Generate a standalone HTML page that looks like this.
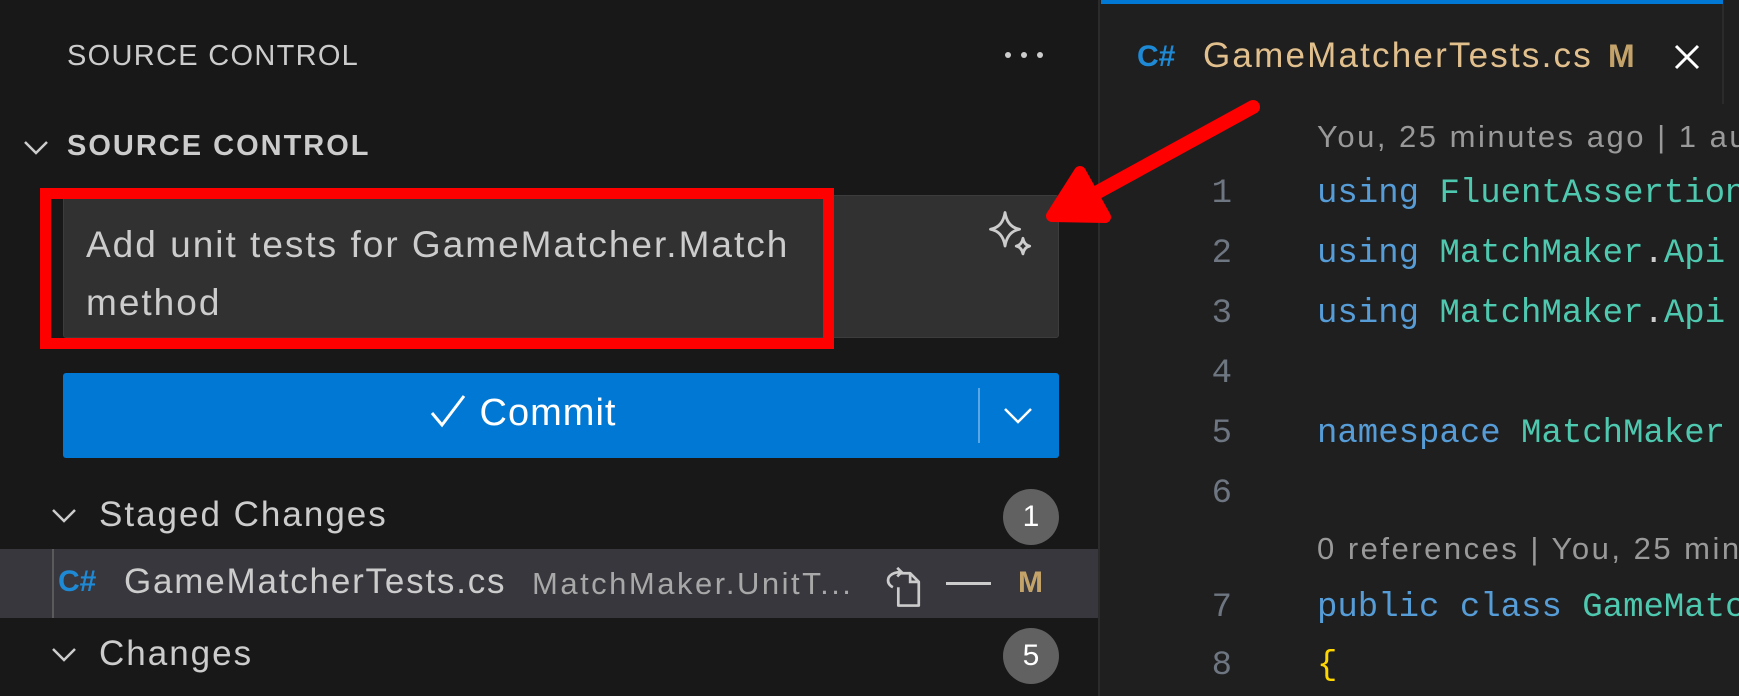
<!DOCTYPE html>
<html><head><meta charset="utf-8"><style>
*{margin:0;padding:0;box-sizing:border-box}
html,body{overflow:hidden}
body{width:1739px;height:696px;background:#181818;position:relative;font-family:"Liberation Sans",sans-serif;color:#ccc}
.a{position:absolute;white-space:nowrap}
.clip{position:absolute;left:0;top:0;width:1739px;height:696px;overflow:hidden}
.mono{font-family:"Liberation Mono",monospace;font-size:34px}
.kw{color:#569cd6}.ty{color:#4ec9b0}
.ln{color:#6e7681;font-family:"Liberation Mono",monospace;font-size:34px;width:60px;text-align:right;left:1172px}
.lens{color:#999;font-size:31px;letter-spacing:2.5px;left:1317px}
.badge{position:absolute;width:56px;height:56px;border-radius:28px;background:#616161;color:#fff;font-size:30px;text-align:center;line-height:56px}
</style></head><body>
<div class="clip">
<div class="a" style="left:1098px;top:0;width:641px;height:696px;background:#1f1f1f;border-left:2px solid #2b2b2b"></div>
<div class="a" style="left:1101px;top:0;width:622px;height:4px;background:#0078d4"></div>
<div class="a" style="left:1722px;top:4px;width:2px;height:100px;background:#2b2b2b"></div>

<div class="a" style="left:67px;top:40px;font-size:29px;letter-spacing:1.3px">SOURCE CONTROL</div>
<svg class="a" style="left:1002px;top:48px" width="44" height="14"><circle cx="6" cy="7" r="3" fill="#ccc"/><circle cx="22" cy="7" r="3" fill="#ccc"/><circle cx="38" cy="7" r="3" fill="#ccc"/></svg>
<svg class="a" style="left:22px;top:136px" width="28" height="24"><path d="M3 6 L14 17 L25 6" stroke="#ccc" stroke-width="2.5" fill="none"/></svg>
<div class="a" style="left:67px;top:130px;font-size:29px;font-weight:bold;letter-spacing:2px">SOURCE CONTROL</div>

<div class="a" style="left:63px;top:195px;width:996px;height:143px;background:#313131;border:1px solid #3c3c3c;border-radius:3px"></div>
<div class="a" style="left:86px;top:216px;font-size:37px;letter-spacing:2px;line-height:58px;color:#ccc">Add unit tests for GameMatcher.Match<br>method</div>
<svg class="a" style="left:986px;top:208px" width="56" height="56" viewBox="0 0 50 50"><path d="M17 4 Q19 17 30 19 Q19 21 17 34 Q15 21 4 19 Q15 17 17 4Z" fill="none" stroke="#ccc" stroke-width="2.5" stroke-linejoin="round"/><path d="M33 27 Q34 33 39 34 Q34 35 33 41 Q32 35 27 34 Q32 33 33 27Z" fill="none" stroke="#ccc" stroke-width="2.5" stroke-linejoin="round"/></svg>
<div class="a" style="left:40px;top:188px;width:794px;height:161px;border:11px solid #f00"></div>

<div class="a" style="left:63px;top:373px;width:996px;height:85px;background:#0078d4;border-radius:3px"></div>
<div class="a" style="left:428px;top:392px;font-size:38px;letter-spacing:1px;color:#fff"><svg width="40" height="36" style="vertical-align:-4px"><path d="M4 20 L14 32 L36 3" stroke="#fff" stroke-width="3" fill="none"/></svg> Commit</div>
<div class="a" style="left:978px;top:388px;width:2px;height:55px;background:#5aa7e6"></div>
<svg class="a" style="left:1002px;top:403px" width="32" height="24"><path d="M3 6 L16 19 L29 6" stroke="#fff" stroke-width="2.5" fill="none"/></svg>

<svg class="a" style="left:50px;top:504px" width="28" height="24"><path d="M3 6 L14 17 L25 6" stroke="#ccc" stroke-width="2.5" fill="none"/></svg>
<div class="a" style="left:99px;top:495px;font-size:35px;letter-spacing:2px">Staged Changes</div>
<div class="badge" style="left:1003px;top:489px">1</div>

<div class="a" style="left:0;top:549px;width:1098px;height:69px;background:#37373d"></div>
<div class="a" style="left:52px;top:549px;width:2px;height:69px;background:#5a5a5a"></div>
<div class="a" style="left:58px;top:565px;font-size:30px;font-weight:bold;color:#1e8ad6">C#</div>
<div class="a" style="left:124px;top:562px;font-size:35px;letter-spacing:1.8px;color:#ccc">GameMatcherTests.cs</div>
<div class="a" style="left:532px;top:566px;font-size:31px;letter-spacing:2.5px;color:#a8a8a8">MatchMaker.UnitT...</div>
<svg class="a" style="left:880px;top:558px" width="56" height="52" viewBox="0 0 52 48"><path d="M19 14 H28 L36 22 V44 H17 V27" fill="none" stroke="#ccc" stroke-width="2.5" stroke-linejoin="round"/><path d="M28 14 V22 H36" fill="none" stroke="#ccc" stroke-width="2.5"/><path d="M12 27 Q6 24 8 18 Q11 13 20 13 M16 9 L20 13 L16 17" fill="none" stroke="#ccc" stroke-width="2.5"/></svg>
<div class="a" style="left:946px;top:582px;width:45px;height:3px;background:#ccc"></div>
<div class="a" style="left:1018px;top:566px;font-size:30px;font-weight:bold;color:#c4a36a">M</div>

<svg class="a" style="left:50px;top:643px" width="28" height="24"><path d="M3 6 L14 17 L25 6" stroke="#ccc" stroke-width="2.5" fill="none"/></svg>
<div class="a" style="left:99px;top:634px;font-size:35px;letter-spacing:2px">Changes</div>
<div class="badge" style="left:1003px;top:628px">5</div>

<div class="a" style="left:1137px;top:40px;font-size:30px;font-weight:bold;color:#1e8ad6">C#</div>
<div class="a" style="left:1203px;top:36px;font-size:35px;letter-spacing:2.2px;color:#e2c08d">GameMatcherTests.cs</div>
<div class="a" style="left:1608px;top:38px;font-size:32px;font-weight:bold;color:#c4a36a">M</div>
<svg class="a" style="left:1672px;top:42px" width="30" height="30"><path d="M4 4 L26 26 M26 4 L4 26" stroke="#fff" stroke-width="3"/></svg>

<div class="a lens" style="top:119px">You, 25 minutes ago | 1 author</div>
<div class="a ln" style="top:175px">1</div><div class="a mono" style="left:1317px;top:175px"><span class="kw">using</span> <span class="ty">FluentAssertions</span></div>
<div class="a ln" style="top:235px">2</div><div class="a mono" style="left:1317px;top:235px"><span class="kw">using</span> <span class="ty">MatchMaker</span><span style="color:#ccc">.</span><span class="ty">Api</span></div>
<div class="a ln" style="top:295px">3</div><div class="a mono" style="left:1317px;top:295px"><span class="kw">using</span> <span class="ty">MatchMaker</span><span style="color:#ccc">.</span><span class="ty">Api</span></div>
<div class="a ln" style="top:355px">4</div>
<div class="a ln" style="top:415px">5</div><div class="a mono" style="left:1317px;top:415px"><span class="kw">namespace</span> <span class="ty">MatchMaker</span></div>
<div class="a ln" style="top:475px">6</div>
<div class="a lens" style="top:531px">0 references | You, 25 minutes ago</div>
<div class="a ln" style="top:589px">7</div><div class="a mono" style="left:1317px;top:589px"><span class="kw">public</span> <span class="kw">class</span> <span class="ty">GameMatcher</span></div>
<div class="a ln" style="top:647px">8</div><div class="a mono" style="left:1317px;top:647px;color:#ffd700">{</div>

<svg class="a" style="left:0;top:0" width="1739" height="696"><path d="M1253 107 L1065 210" stroke="#f00" stroke-width="14" stroke-linecap="round"/><path d="M1080 172 L1052 216 L1105 217 Z" stroke="#f00" stroke-width="12" stroke-linecap="round" stroke-linejoin="round" fill="#f00"/></svg>
</div>
</body></html>
